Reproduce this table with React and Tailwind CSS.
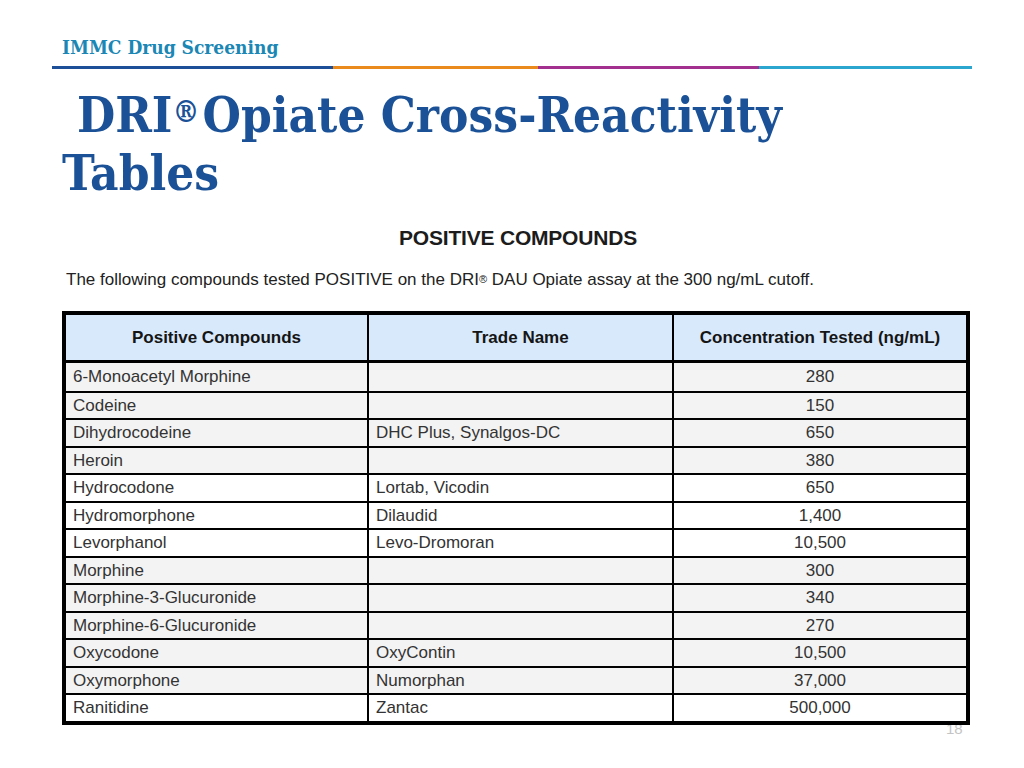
import React from "react";

const rows = [
  ["6-Monoacetyl Morphine", "", "280", true],
  ["Codeine", "", "150", true],
  ["Dihydrocodeine", "DHC Plus, Synalgos-DC", "650", true],
  ["Heroin", "", "380", true],
  ["Hydrocodone", "Lortab, Vicodin", "650", false],
  ["Hydromorphone", "Dilaudid", "1,400", false],
  ["Levorphanol", "Levo-Dromoran", "10,500", false],
  ["Morphine", "", "300", true],
  ["Morphine-3-Glucuronide", "", "340", true],
  ["Morphine-6-Glucuronide", "", "270", true],
  ["Oxycodone", "OxyContin", "10,500", true],
  ["Oxymorphone", "Numorphan", "37,000", true],
  ["Ranitidine", "Zantac", "500,000", false],
];

const serif = "font-['DejaVu_Serif_Condensed','DejaVu_Serif',serif]";
const arial = "font-['Liberation_Sans',Arial,sans-serif]";

export default function App() {
  return (
    <div className="relative w-[1024px] h-[768px] bg-white overflow-hidden">
      {/* header */}
      <div className="pl-[62px] pt-[34px]">
        <div className={`${serif} font-bold text-[19px] leading-[26px] text-[#1b87b5]`}>
          IMMC Drug Screening
        </div>
      </div>
      <div className="mx-[52px] mt-[6px] flex h-[3px] w-[920px]">
        <div className="w-[281px] bg-[#1c4f98]" />
        <div className="w-[205px] bg-[#ea8a1c]" />
        <div className="w-[221px] bg-[#a3308f]" />
        <div className="flex-1 bg-[#2ba7cf]" />
      </div>

      {/* title */}
      <h1 className={`${serif} font-bold text-[49px] leading-[58px] text-[#1a5197] pl-[62px] mt-[17px]`}>
        <div className="flex items-start pl-[15px]">
          <span>DRI</span>
          <span className="text-[30px] leading-none mt-[11px] mr-[3px]">®</span>
          <span>Opiate Cross-Reactivity</span>
        </div>
        <div>Tables</div>
      </h1>

      <div className={`${arial} text-[#1c1c1c]`}>
        <div className="mt-[23px] text-center font-bold text-[21px] leading-[26px] pl-[12px] tracking-[-0.2px]">
          POSITIVE COMPOUNDS
        </div>
        <div className="mt-[18px] pl-[66px] text-[17px] leading-[22px] text-[#222]">
          The following compounds tested POSITIVE on the DRI
          <sup className="text-[11px] relative -top-[2px]">®</sup> DAU Opiate assay at the 300 ng/mL cutoff.
        </div>

        {/* table */}
        <div className="relative z-10 ml-[62px] mt-[20px] w-[908px] border-4 border-black bg-white">
          <div className="grid grid-cols-[303px_305px_1fr] h-[48px] border-b-[3px] border-black bg-[#d7e9fb] font-bold text-[17px] text-[#151515]">
            <div className="flex items-center justify-center border-r-2 border-black">Positive Compounds</div>
            <div className="flex items-center justify-center border-r-2 border-black">Trade Name</div>
            <div className="flex items-center justify-center">Concentration Tested (ng/mL)</div>
          </div>
          {rows.map(([name, trade, conc, shaded], i) => (
            <div
              key={name}
              className={`grid grid-cols-[303px_305px_1fr] h-[27.5px] text-[17px] text-[#333] ${
                i > 0 ? "border-t-2 border-black" : ""
              } ${shaded ? "bg-[#f3f3f3]" : "bg-white"}`}
            >
              <div className="flex items-center pl-[7px] border-r-2 border-black">{name}</div>
              <div className="flex items-center pl-[7px] border-r-2 border-black">{trade}</div>
              <div className="flex items-center justify-center">{conc}</div>
            </div>
          ))}
        </div>
      </div>

      {/* page number, mostly hidden behind the table */}
      <div className={`${arial} absolute left-[946px] top-[719px] text-[15px] leading-[20px] text-[#c4c4c4]`}>18</div>
    </div>
  );
}
